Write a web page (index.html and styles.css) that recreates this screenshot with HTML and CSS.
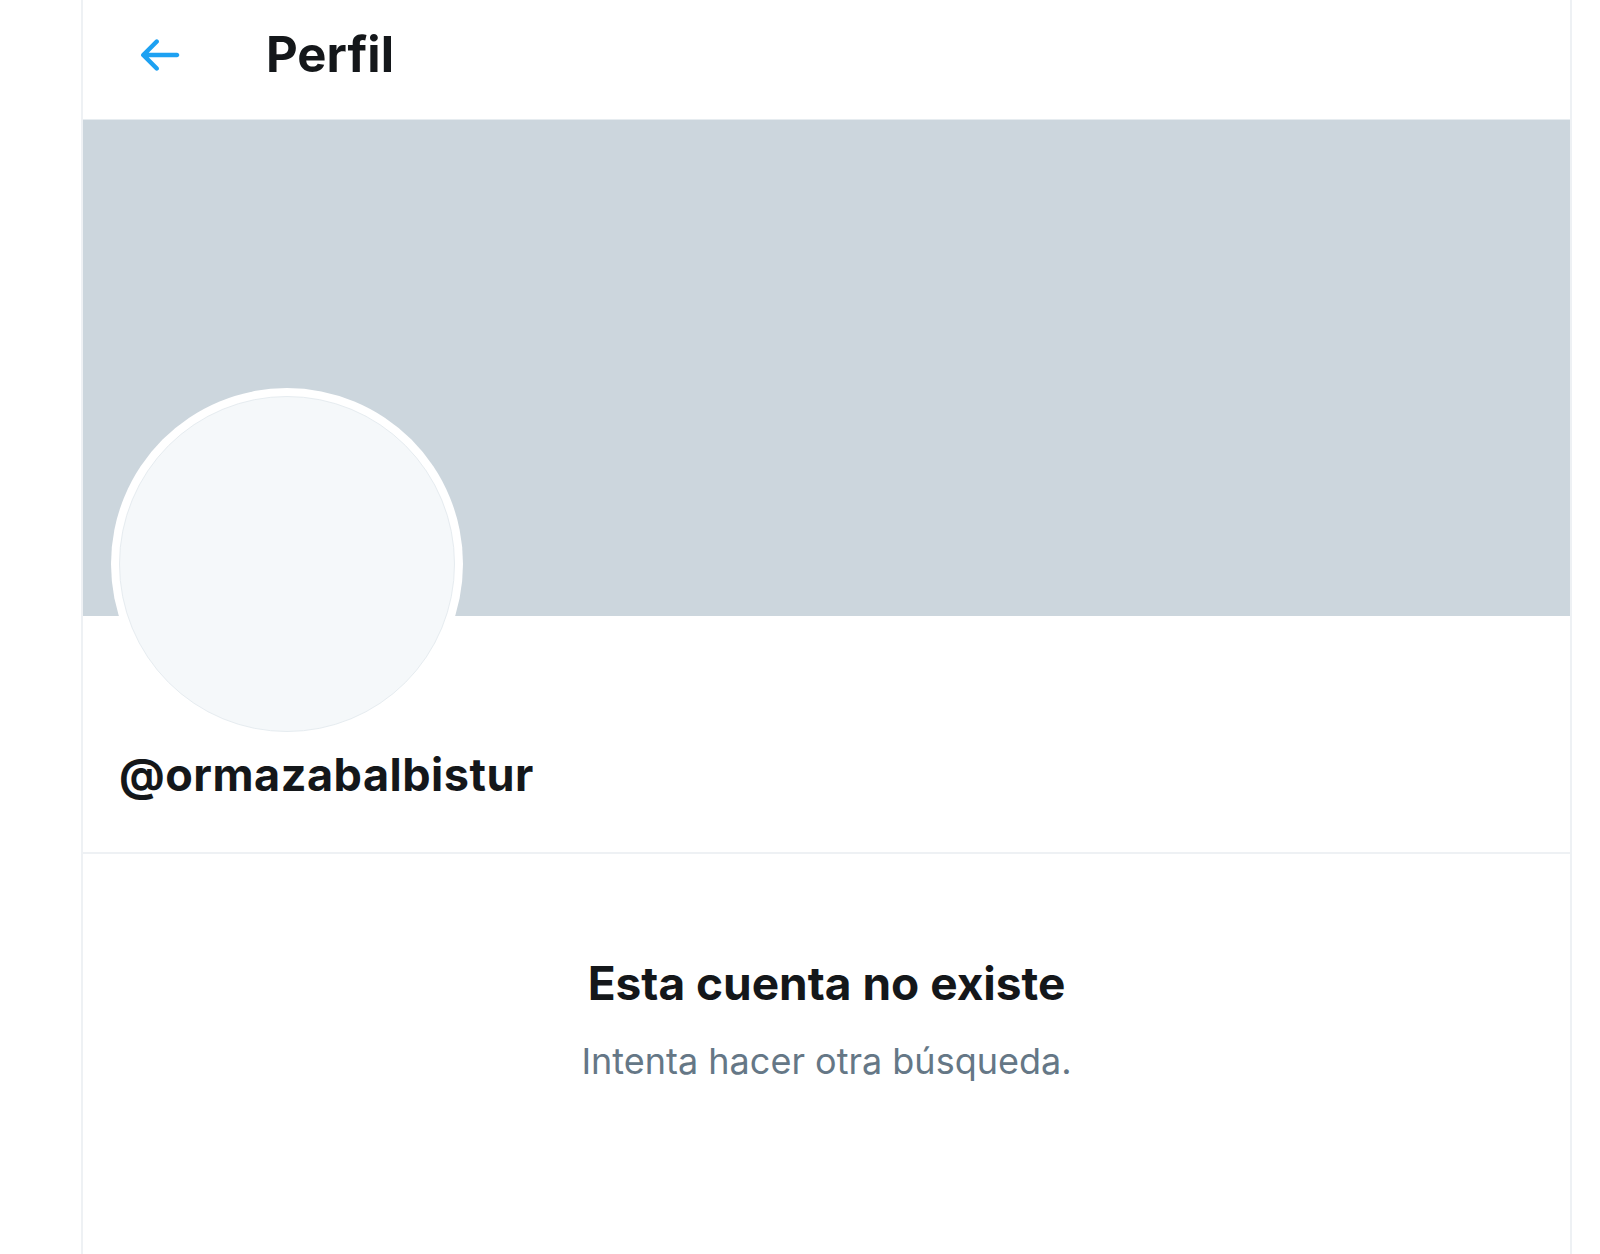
FILE: index.html
```html
<!DOCTYPE html>
<html lang="es">
<head>
<meta charset="utf-8">
<title>Perfil</title>
<link rel="stylesheet" href="styles.css">
</head>
<body>
<main class="column">
  <header class="topbar">
    <span class="back">
      <svg viewBox="0 0 24 24" width="54" height="54" aria-hidden="true"><path fill="#1da1f2" d="M20 11H7.414l4.293-4.293c.39-.39.39-1.023 0-1.414s-1.023-.39-1.414 0l-6 6c-.39.39-.39 1.023 0 1.414l6 6c.195.195.45.293.707.293s.512-.098.707-.293c.39-.39.39-1.023 0-1.414L7.414 13H20c.553 0 1-.447 1-1s-.447-1-1-1z"/></svg>
    </span>
    <h1 class="title">Perfil</h1>
  </header>
  <div class="banner"></div>
  <section class="profile">
    <div class="avatar"><div class="avatar-inner"></div></div>
    <div class="handle">@ormazabalbistur</div>
  </section>
  <section class="empty">
    <h2 class="empty-title">Esta cuenta no existe</h2>
    <p class="empty-sub">Intenta hacer otra búsqueda.</p>
  </section>
</main>
</body>
</html>
```
FILE: styles.css
```css
html, body {
  margin: 0;
  padding: 0;
  background: #ffffff;
}
body {
  font-family: Inter, "Noto Sans", "Liberation Sans", sans-serif;
  color: #14171a;
  height: 1254px;
  overflow: hidden;
}
.column {
  margin-left: 81px;
  width: 1491px;
  min-height: 1254px;
  border-left: 2px solid #eef1f4;
  border-right: 2px solid #eef1f4;
  box-sizing: border-box;
}
.topbar {
  height: 120px;
  box-sizing: border-box;
  display: flex;
  align-items: center;
  padding-left: 49px;
  padding-bottom: 10px;
  border-bottom: 1px solid #e6ecf0;
}
.back {
  display: flex;
  width: 54px;
  height: 54px;
}
.title {
  margin: 0 0 0 80px;
  font-size: 49px;
  font-weight: 700;
  line-height: 1;
}
.banner {
  height: 496px;
  background: #ccd6dd;
}
.profile {
  display: flex;
  flex-direction: column;
  align-items: flex-start;
  padding: 0 0 0 28px;
  height: 236px;
  border-bottom: 2px solid #eef1f4;
}
.avatar {
  width: 352px;
  height: 352px;
  margin-top: -228px;
  border-radius: 50%;
  background: #ffffff;
  padding: 8px;
  box-sizing: border-box;
}
.avatar-inner {
  width: 100%;
  height: 100%;
  border-radius: 50%;
  background: #f5f8fa;
  border: 1px solid #e6ecf0;
  box-sizing: border-box;
}
.handle {
  margin-top: 12px;
  margin-left: 8px;
  font-size: 45px;
  font-weight: 700;
  line-height: 1;
  letter-spacing: 0.5px;
}
.empty {
  text-align: center;
  padding-top: 102px;
}
.empty-title {
  margin: 0;
  font-size: 46px;
  font-weight: 700;
  line-height: 1.2;
}
.empty-sub {
  margin: 29px 0 0;
  font-size: 36px;
  font-weight: 400;
  line-height: 1.2;
  color: #657786;
}
```
